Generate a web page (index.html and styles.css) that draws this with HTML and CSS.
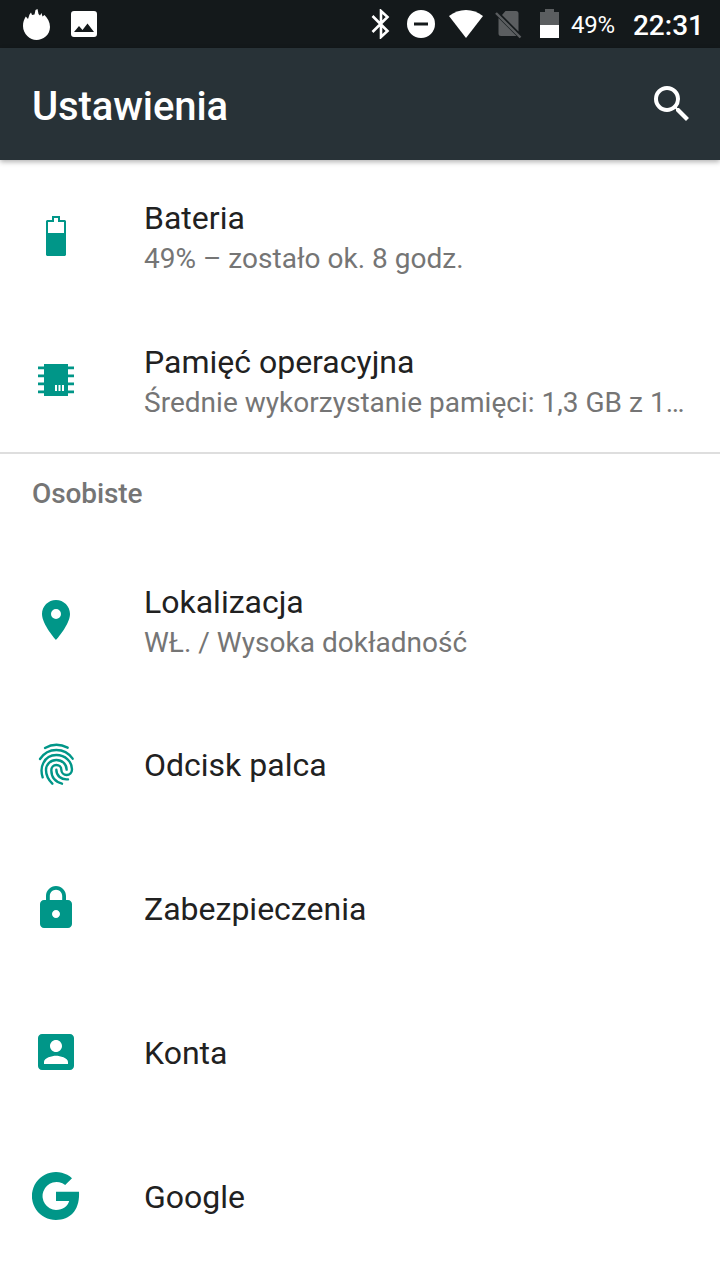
FILE: index.html
```html
<!DOCTYPE html>
<html lang="pl">
<head>
<meta charset="utf-8">
<title>Ustawienia</title>
<link rel="stylesheet" href="styles.css">
</head>
<body>
<div class="status-bar">
  <svg class="flame" width="28" height="32" viewBox="0 0 28 32"><path d="M1 17C1 13 2 10.500 3.800 7.500L6 10 7.500 5.500 9 3.500 10 6 12.500 5.500 13.500 1 15.500 0 16.500 5 18 6.500 19.500 4 20.500 7.500 22.500 6C25.500 9 28 13 28 18C28 26 21 31 14.500 31S1 25 1 17Z"/></svg>
  <svg class="photo" width="26" height="26" viewBox="0 0 26 26"><path fill-rule="evenodd" d="M3 0H23Q26 0 26 3V23Q26 26 23 26H3Q0 26 0 23V3Q0 0 3 0ZM3 21H23L16.500 12.500 11.500 19 8 15Z"/></svg>
  <div class="indicators">
    <svg width="20" height="30" viewBox="0 0 20 30"><path class="line" d="M1.500 7L16.500 22 10 28V2L16.500 8 1.500 23"/></svg>
    <svg class="dnd" width="28" height="28" viewBox="0 0 28 28"><path fill-rule="evenodd" d="M14 0A14 14 0 1 1 14 28A14 14 0 1 1 14 0ZM7 12.500V15.500H21V12.500Z"/></svg>
    <svg class="wifi" width="34" height="28" viewBox="0 0 34 28"><path d="M17 28L0 6Q7.500 0 17 0T34 6Z"/></svg>
    <svg class="sim" width="28" height="30" viewBox="0 0 28 30"><path d="M10.500 1H21Q23.500 1 23.500 3.500V21.500L7 5ZM3.500 8L21.500 26H6Q3.500 26 3.500 23.500Z"/><path class="slash" d="M1 3L25.500 27.500"/></svg>
    <svg class="charge" width="19" height="29" viewBox="0 0 19 29"><path class="dim" d="M0 3H5V0H14V3H19V16H0Z"/><path d="M0 16H19V29H0Z"/></svg>
    <span class="percent">49%</span>
    <span class="clock">22:31</span>
  </div>
</div>
<header class="app-bar">
  <h1 class="title">Ustawienia</h1>
  <svg width="48" height="48" viewBox="0 0 24 24"><path d="M15.500 14h-.79l-.28-.27A6.471 6.471 0 0 0 16 9.500 6.500 6.500 0 1 0 9.500 16c1.610 0 3.090-.59 4.230-1.570l.27.28v.79l5 4.990L20.490 19l-4.990-5zm-6 0C7.010 14 5 11.990 5 9.500S7.010 5 9.500 5 14 7.010 14 9.500 11.990 14 9.500 14z"/></svg>
</header>
<main>
  <section class="group">
    <div class="row">
      <svg class="icon" viewBox="0 0 48 48"><path fill-rule="evenodd" d="M20 4H28V8H33L34 9V43L33 44H15L14 43V9L15 8H20ZM22 6V10H16V21H32V10H26V6Z"/></svg>
      <div class="copy double"><div class="name">Bateria</div><div class="summary">49% – zostało ok. 8 godz.</div></div>
    </div>
    <div class="row">
      <svg class="icon" viewBox="0 0 48 48"><path d="M12 8H36V40H12ZM6 10.500H42V13.300H6ZM6 18.500H42V21.300H6ZM6 26.500H42V29.300H6ZM6 34.500H42V37.300H6Z"/><path class="paper" d="M23 29H25V35H23ZM26.500 29H28.500V35H26.500ZM30 29H32V35H30Z"/></svg>
      <div class="copy double"><div class="name">Pamięć operacyjna</div><div class="summary">Średnie wykorzystanie pamięci: 1,3 GB z 1…</div></div>
    </div>
  </section>
  <section class="group personal">
    <h2 class="category">Osobiste</h2>
    <div class="row">
      <svg class="icon" viewBox="0 0 24 24"><path d="M12 2C8.130 2 5 5.130 5 9c0 5.250 7 13 7 13s7-7.750 7-13c0-3.870-3.130-7-7-7zm0 9.500a2.500 2.500 0 0 1 0-5 2.500 2.500 0 0 1 0 5z"/></svg>
      <div class="copy double"><div class="name">Lokalizacja</div><div class="summary">WŁ. / Wysoka dokładność</div></div>
    </div>
    <div class="row">
      <svg class="icon" viewBox="36 45 144 144"><g class="ridges"><path d="M75 69Q108 50 143 68"/><path d="M60 102C72 84 88 75 109 75S146 84 158 101"/><path d="M68 157C62 138 64 125 70 114C78 98 92 90 109 90C136 90 156 110 156 133C156 143 149 150 140 150S124 143 124 134C124 125 117 120 109 120C100 120 94 127 94 136C94 157 107 171 126 176"/><path d="M97 176C84 163 78 151 78 135C78 118 92 105 109 105C127 105 140 118 140 134"/><path d="M109 134C109 152 123 165 144 163"/></g></svg>
      <div class="copy"><div class="name">Odcisk palca</div></div>
    </div>
    <div class="row">
      <svg class="icon" viewBox="0 0 24 24"><path d="M18 8h-1V6c0-2.760-2.240-5-5-5S7 3.240 7 6v2H6c-1.100 0-2 .9-2 2v10c0 1.100.9 2 2 2h12c1.100 0 2-.9 2-2V10c0-1.100-.9-2-2-2zm-6 9c-1.100 0-2-.9-2-2s.9-2 2-2 2 .9 2 2-.9 2-2 2zm3.100-9H8.900V6c0-1.710 1.390-3.100 3.100-3.100 1.710 0 3.100 1.390 3.100 3.100v2z"/></svg>
      <div class="copy"><div class="name">Zabezpieczenia</div></div>
    </div>
    <div class="row">
      <svg class="icon" viewBox="0 0 24 24"><path d="M3 5v14c0 1.100.89 2 2 2h14c1.100 0 2-.9 2-2V5c0-1.100-.9-2-2-2H5c-1.110 0-2 .9-2 2zm12 4c0 1.660-1.340 3-3 3s-3-1.340-3-3 1.340-3 3-3 3 1.340 3 3zm-9 8c0-2 4-3.100 6-3.100s6 1.100 6 3.100v1H6v-1z"/></svg>
      <div class="copy"><div class="name">Konta</div></div>
    </div>
    <div class="row">
      <svg class="icon" viewBox="0 0 48 48"><path d="M40 6.200A24 24 0 1 0 24 48C39 48 48 37.500 47 19.700H24V29H37.200C35.500 34.500 31 38 24 38A14 14 0 1 1 33.200 13Z"/></svg>
      <div class="copy"><div class="name">Google</div></div>
    </div>
  </section>
</main>
</body>
</html>
```
FILE: styles.css
```css
* { box-sizing: border-box; }
body {
  margin: 0;
  height: 1280px;
  overflow: hidden;
  background: #fff;
  color: #212121;
  font-family: Roboto, sans-serif;
}
svg { display: block; flex: none; fill: #fff; }
h1, h2 { margin: 0; font-weight: 500; }

.status-bar {
  display: flex;
  align-items: center;
  height: 48px;
  padding: 0 16px 0 22px;
  background: #14191b;
  color: #fff;
}
.flame { margin-top: 2px; }
.photo { margin-left: 21px; }
.indicators { display: flex; align-items: center; margin-left: auto; }
.line { fill: none; stroke: #fff; stroke-width: 2.6; }
.dnd { margin-left: 16px; }
.wifi { margin-left: 14px; }
.sim { margin-left: 12px; margin-top: 2px; }
.sim path, .dim { fill: #5b5e60; }
.sim .slash { fill: none; stroke: #5b5e60; stroke-width: 2.4; }
.charge { margin-left: 17px; margin-right: 12px; margin-top: -1px; }
.percent { width: 62px; font-size: 24px; line-height: 48px; padding-top: 2px; letter-spacing: -.2px; }
.clock { font-size: 28px; font-weight: 500; line-height: 48px; padding-top: 4px; }

.app-bar {
  position: relative;
  display: flex;
  align-items: center;
  justify-content: space-between;
  height: 112px;
  padding: 0 24px 0 32px;
  background: #283237;
  color: #fff;
  box-shadow: 0 2px 5px rgba(0, 0, 0, .3);
}
.title { font-size: 40px; line-height: 48px; padding-top: 6px; letter-spacing: -.1px; }

.group { padding-top: 4px; }
.row {
  display: flex;
  align-items: center;
  height: 144px;
  padding: 0 32px;
}
.icon { width: 48px; height: 48px; margin-right: 64px; fill: #009688; }
.paper { fill: #fff; }
.ridges { fill: none; stroke: #009688; stroke-width: 7.2; stroke-linecap: round; }
.copy { flex: 1; min-width: 0; padding-top: 2px; }
.double { padding-top: 5px; }
.double .name { line-height: 41px; }
.name { font-size: 32px; line-height: 40px; }
.summary {
  color: #757575;
  font-size: 28px;
  line-height: 40px;
  white-space: nowrap;
  letter-spacing: .02px;
}
.personal { padding-top: 0; border-top: 2px solid #dedede; }
.category {
  height: 94px;
  padding: 20px 32px 0;
  color: #757575;
  font-size: 28px;
  line-height: 40px;
  letter-spacing: -.1px;
}
```
